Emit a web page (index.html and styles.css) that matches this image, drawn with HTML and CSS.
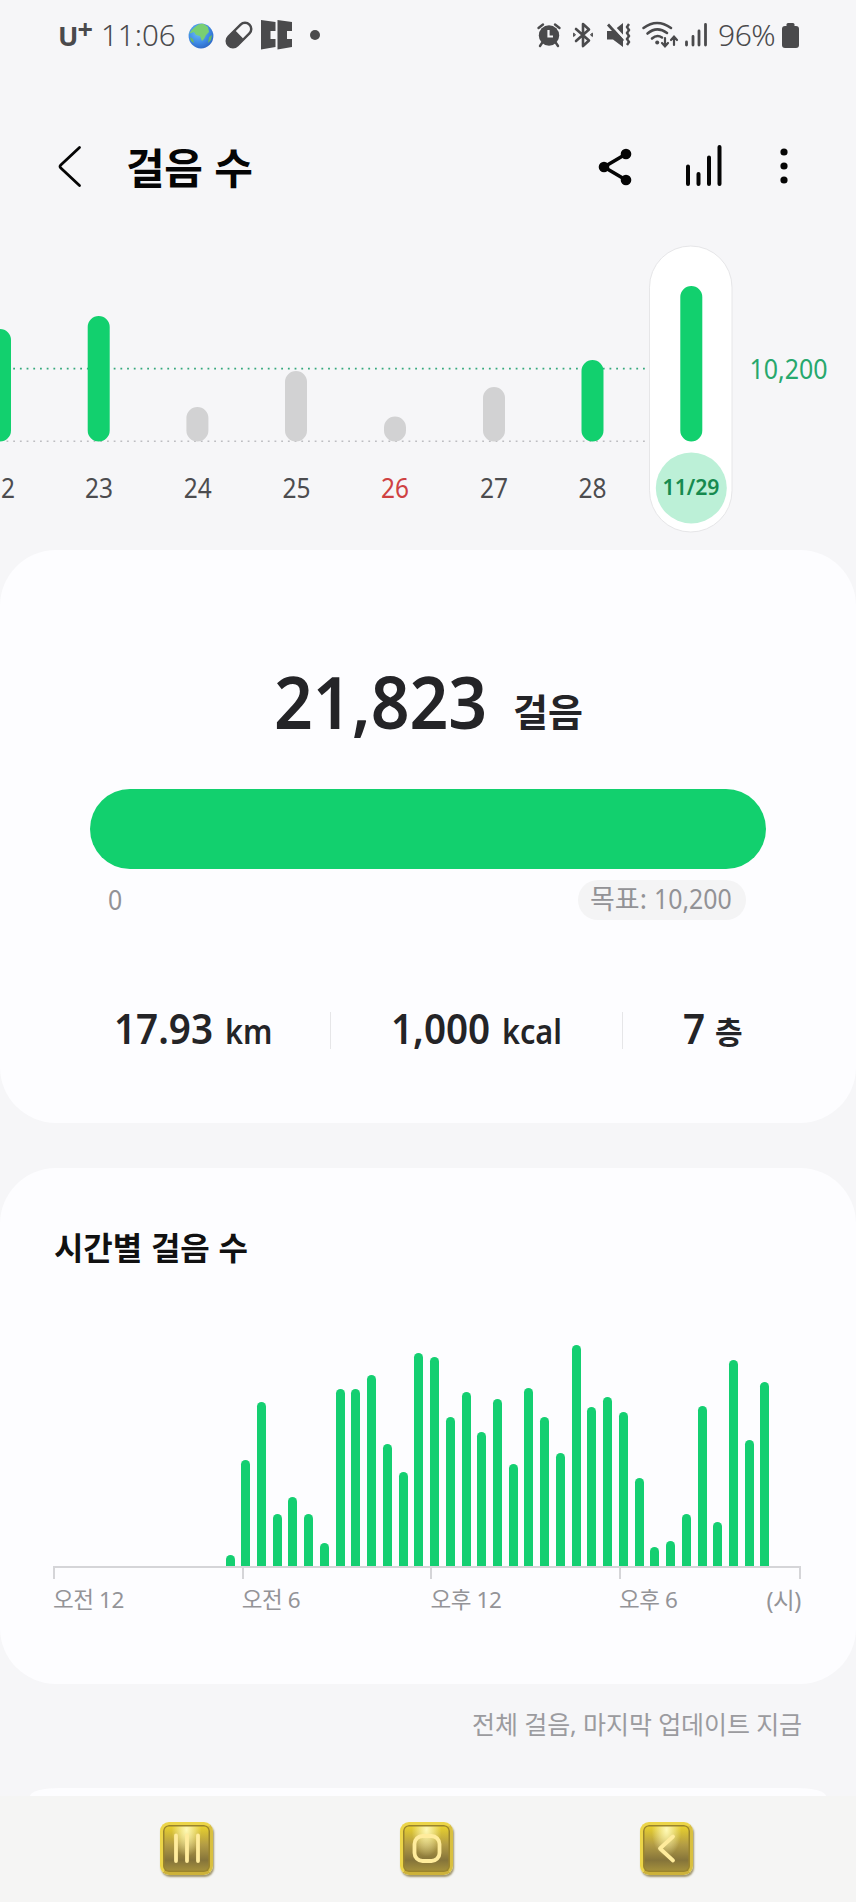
FILE: index.html
```html
<!DOCTYPE html>
<html lang="ko">
<head>
<meta charset="utf-8">
<title>걸음 수</title>
<link rel="stylesheet" href="styles.css">
</head>
<body>
<div class="status">
  <div class="status-left">
    <span class="carrier">U<span class="plus">+</span></span>
    <span class="clock">11:06</span>
    <svg class="globe" width="26" height="26" viewBox="0 0 26 26">
      <defs><radialGradient id="sea" cx=".4" cy=".35" r=".7"><stop offset="0" stop-color="#6cc0f4"/><stop offset=".6" stop-color="#3f8be6"/><stop offset="1" stop-color="#2c66c4"/></radialGradient></defs>
      <circle cx="13" cy="13" r="12.4" fill="url(#sea)"/>
      <path d="M7 4Q11 0 16 1l4 3 1 5-3 3-2 4-2 2-2-5-4-1-2-3-3 1-2 1Q3 7 7 4Z" fill="#79cf72"/>
      <path d="M21 14l3-2-1 5-3 3zM2 14l3 2 1 4-3-2z" fill="#68b965"/>
    </svg>
    <svg class="pill" width="28" height="28" viewBox="0 0 28 28">
      <g transform="rotate(-45 14 14)"><rect x="-2" y="6.500" width="32" height="15" rx="7.500" fill="#4a4a4c"/><path d="M14.500 9H22.500a5 5 0 0 1 0 10H14.500Z" fill="#f6f6f8"/></g>
    </svg>
    <svg class="marks" width="32" height="30" viewBox="0 0 32 30" fill="#4a4a4c">
      <path d="M0 0 14.500 2V11H9.500V19H14.500V27L0 29.500ZM16.500 0 31 2V11H26V19H31V27L16.500 29.500Z"/>
    </svg>
    <span class="dot"></span>
  </div>
  <div class="status-right">
    <svg width="24" height="24" viewBox="0 0 24 24" fill="#4a4a4c"><circle cx="12" cy="12.500" r="10.200"/><path d="M1.500 5 6 1.500M22.500 5 18 1.500M5 20l-2 3M19 20l2 3" stroke="#4a4a4c" stroke-width="2.400" stroke-linecap="round"/><path d="M11.500 7v6.500H16" fill="none" stroke="#f6f6f8" stroke-width="2.200"/></svg>
    <svg class="bt" width="22" height="26" viewBox="0 0 22 26" fill="none" stroke="#4a4a4c" stroke-width="2.600" stroke-linecap="round" stroke-linejoin="round"><path d="M4 7l13 11.500-6 5.500V2l6 5.500L4 19"/><path d="M1.600 11.500v3l1.700-1.500zM20.400 11.500v3L18.700 13z" fill="#4a4a4c" stroke-width="1"/></svg>
    <svg class="mute" width="24" height="24" viewBox="0 0 24 24" fill="#4a4a4c"><path d="M0 8H6L16 0V24L6 16.500H0Z"/><path d="M3 0 19 17" stroke="#f6f6f8" stroke-width="3"/><path d="M1 1.500 16 18" stroke="#4a4a4c" stroke-width="2.800"/><path d="M22 1l-2 3 2 3-2 3 2 3-2 3 2 3-2 3" fill="none" stroke="#4a4a4c" stroke-width="2.400"/></svg>
    <svg class="wifi" width="36" height="26" viewBox="0 0 36 26" fill="none" stroke="#4a4a4c" stroke-width="2.600" stroke-linecap="round"><path d="M1.500 6Q15-4 29 6M5.500 11.500Q15 3.500 25 11M10 16.500Q15 12 20 15.500"/><circle cx="15.200" cy="20.500" r="2" fill="#4a4a4c" stroke="none"/><path d="M23 16v8m-3-3 3 3.300 3-3.300M32 23v-8m-3 3 3-3.300 3 3.300" stroke-width="2.200"/></svg>
    <svg class="signal" width="22" height="24" viewBox="0 0 22 24" stroke="#4a4a4c" stroke-width="2.800" stroke-linecap="round"><path d="M1.500 19v3M8 13.500V22M14 8V22M20.500 1.500V22"/></svg>
    <span class="percent">96%</span>
    <svg class="battery" width="17" height="25" viewBox="0 0 17 25" fill="#4a4a4c"><rect x="4.500" width="8" height="6" rx="1.500"/><rect y="3" width="17" height="22" rx="3"/></svg>
  </div>
</div>

<header class="header">
  <svg class="back" width="24" height="42" viewBox="0 0 24 42" fill="none" stroke="#050505" stroke-width="2.800" stroke-linecap="round" stroke-linejoin="round"><path d="M21.500 1.500 2.800 19Q1.200 20.500 2.800 22L21.500 39.500"/></svg>
  <h1>걸음 수</h1>
  <svg class="share" width="34" height="38" viewBox="0 0 34 38"><path d="M28 6 6 19 28 32" fill="none" stroke="#050505" stroke-width="3.600"/><g fill="#050505"><circle cx="28" cy="6" r="5.300"/><circle cx="6" cy="19" r="5.300"/><circle cx="28" cy="32" r="5.300"/></g></svg>
  <svg class="bars-icon" width="36" height="42" viewBox="0 0 36 42" stroke="#050505" stroke-width="4" stroke-linecap="round"><path d="M2 21.500V39M12.500 29V39M23 12.500V39M33.500 2V39"/></svg>
  <svg class="more" width="8" height="36" viewBox="0 0 8 36" fill="#050505"><circle cx="4" cy="4" r="3.600"/><circle cx="4" cy="18" r="3.600"/><circle cx="4" cy="32" r="3.600"/></svg>
</header>

<section class="week">
  <svg width="856" height="310" viewBox="0 240 856 310">
    <path class="goal-line" d="M6.500 368.700H650"/>
    <path class="zero-line" d="M6.500 441.300H650"/>
    <rect class="capsule" x="649.500" y="246" width="82.500" height="286" rx="41.250"/>
    <g class="met">
      <path d="M0 340V430.500M98.700 327V430.500M592.500 371V430.500M691.300 297V430.500"/>
    </g>
    <g class="unmet">
      <path d="M197.400 418V430.500M296 382V430.500M395 427.500V430.500M494 398V430.500"/>
    </g>
    <circle class="today" cx="691.300" cy="488" r="35.500"/>
    <g class="day">
      <text x="8" y="497.500" textLength="14" lengthAdjust="spacingAndGlyphs">2</text>
      <text x="99" y="497.500" textLength="28" lengthAdjust="spacingAndGlyphs">23</text>
      <text x="197.700" y="497.500" textLength="28" lengthAdjust="spacingAndGlyphs">24</text>
      <text x="296.500" y="497.500" textLength="28" lengthAdjust="spacingAndGlyphs">25</text>
      <text class="sunday" x="395" y="497.500" textLength="28" lengthAdjust="spacingAndGlyphs">26</text>
      <text x="494" y="497.500" textLength="28" lengthAdjust="spacingAndGlyphs">27</text>
      <text x="592.500" y="497.500" textLength="28" lengthAdjust="spacingAndGlyphs">28</text>
    </g>
    <text class="today-label" x="691" y="495.300" textLength="57" lengthAdjust="spacingAndGlyphs">11/29</text>
    <text class="goal-label" x="749.500" y="378.700" textLength="78" lengthAdjust="spacingAndGlyphs">10,200</text>
  </svg>
</section>

<section class="card summary">
  <div class="total"><span class="total-num"><span class="narrow">21,823</span></span><span class="total-unit">걸음</span></div>
  <div class="progress"></div>
  <div class="range"><span class="zero narrow">0</span><span class="goal">목표: <span class="goal-num narrow">10,200</span></span></div>
  <div class="stats">
    <div class="stat"><b class="narrow">17.93</b><span class="narrow">km</span></div>
    <div class="stat"><b class="narrow">1,000</b><span class="narrow">kcal</span></div>
    <div class="stat"><b class="narrow">7</b><span class="floors">층</span></div>
  </div>
</section>

<section class="card hourly">
  <h2>시간별 걸음 수</h2>
  <div class="plot">
    <i style="height:11.500px"></i><i style="height:106px"></i><i style="height:164px"></i><i style="height:52.500px"></i><i style="height:69px"></i><i style="height:52.500px"></i><i style="height:23px"></i>
    <i style="height:177.500px"></i><i style="height:177px"></i><i style="height:191px"></i><i style="height:122px"></i><i style="height:94px"></i><i style="height:213px"></i><i style="height:209px"></i>
    <i style="height:149.500px"></i><i style="height:174px"></i><i style="height:134.500px"></i><i style="height:167px"></i><i style="height:102px"></i><i style="height:178px"></i><i style="height:149px"></i>
    <i style="height:113px"></i><i style="height:221.500px"></i><i style="height:159px"></i><i style="height:169.500px"></i><i style="height:154px"></i><i style="height:88px"></i><i style="height:19px"></i>
    <i style="height:25px"></i><i style="height:52.500px"></i><i style="height:160px"></i><i style="height:44.500px"></i><i style="height:206px"></i><i style="height:126px"></i><i style="height:184px"></i>
  </div>
  <div class="axis"><span>오전 12</span><span>오전 6</span><span>오후 12</span><span class="last">오후 6<em>(시)</em></span></div>
</section>

<p class="updated">전체 걸음, 마지막 업데이트 지금</p>
<div class="next-card"></div>

<nav class="nav">
  <span class="key"><svg width="28" height="30" viewBox="0 0 28 30"><path d="M3 1.500V27M14 1.500V27M25 1.500V27"/></svg></span>
  <span class="key"><svg width="28" height="30" viewBox="0 0 28 30"><rect x="1.500" y="2" width="25" height="25" rx="8"/></svg></span>
  <span class="key"><svg width="28" height="30" viewBox="0 0 28 30"><path d="M20 2.500 7 14.500 20 26.500"/></svg></span>
</nav>
</body>
</html>
```
FILE: styles.css
```css
* { box-sizing: border-box; }
body {
  margin: 0;
  width: 856px;
  height: 1902px;
  overflow: hidden;
  background: #f6f6f8;
  color: #242427;
  font-family: "Noto Sans", "Noto Sans CJK KR", sans-serif;
}
h1, h2, p { margin: 0; }
svg { display: block; flex: none; overflow: visible; }
.narrow { display: inline-block; transform: scaleX(.92); transform-origin: 0 50%; }

.status { display: flex; justify-content: space-between; height: 70px; padding: 0 57px 0 58px; color: #4a4a4c; }
.status-left, .status-right { display: flex; align-items: center; }
.carrier { display: flex; width: 43px; font: 700 27px/36px "Noto Sans", sans-serif; padding-top: 2px; }
.plus { font-size: 27px; font-weight: 700; line-height: 22px; margin-left: -1px; }
.clock { width: 86px; font: 300 29.500px/40px "Noto Sans", sans-serif; }
.globe { margin-left: 1px; margin-top: 2px; }
.pill { margin-left: 11px; }
.marks { margin-left: 8px; }
.dot { width: 10px; height: 10px; margin-left: 17px; border-radius: 50%; background: #4a4a4c; }
.bt { margin-left: 11px; }
.mute { margin-left: 13px; }
.wifi { margin-left: 11px; }
.signal { margin-left: 7px; }
.percent { width: 60px; margin-left: 11px; font: 300 30px/40px "Noto Sans", sans-serif; letter-spacing: -.5px; white-space: nowrap; }
.battery { margin-left: 4px; }

.header { display: flex; align-items: center; height: 170px; padding: 22px 68px 0 58px; color: #050505; }
.back { margin-top: 2px; }
.header h1 { flex: 1; margin: -1px 0 0 44px; font: 700 42px/60px "Noto Sans CJK KR", sans-serif; letter-spacing: -.3px; }
.bars-icon { margin-left: 54px; }
.share { margin-top: 1px; }
.more { margin-left: 58px; }

.week { height: 310px; overflow: hidden; }
.goal-line, .zero-line { fill: none; stroke-width: 1.800; stroke-dasharray: 1.800 4.900; stroke: #35a97c; }
.zero-line { stroke: #bdbdc1; stroke-width: 1.500; }
.capsule { fill: #fff; stroke: #e6e6e8; }
.met, .unmet { fill: none; stroke-width: 22; stroke-linecap: round; }
.met { stroke: #12d06e; }
.unmet { stroke: #d2d2d3; }
.today { fill: #bcf0d7; }
.day { font-size: 27px; fill: #4c4c4f; text-anchor: middle; }
.day .sunday { fill: #cf4142; }
.today-label { font-size: 22px; font-weight: 600; fill: #168a4f; text-anchor: middle; }
.goal-label { font-size: 27px; fill: #27a86d; }

.card { border-radius: 56px; background: #fdfdff; }
.summary { height: 573px; padding: 107px 90px 0; }
.total { display: flex; align-items: baseline; height: 132px; padding-left: 184px; line-height: 90px; font-weight: 600; }
.total-num { width: 239px; font-size: 71.500px; }
.total-num .narrow { transform: scaleX(.95); }
.total-unit { position: relative; top: -3px; font-family: "Noto Sans CJK KR", sans-serif; font-size: 38px; font-weight: 700; letter-spacing: 0; }
.progress { height: 80px; border-radius: 40px; background: #12d06e; }
.range { display: flex; justify-content: space-between; padding: 11px 20px 0 18px; color: #929296; font-size: 27px; line-height: 39px; }
.goal { width: 168px; height: 40px; padding-left: 12px; border-radius: 20px; background: #f4f4f5; font-size: 27px; white-space: nowrap; line-height: 38px; }
.stats { display: grid; grid-template-columns: 240px 292px 144px; margin-top: 92px; height: 34px; }
.stat { display: flex; align-items: baseline; line-height: 32px; padding-left: 24px; white-space: nowrap; }
.stat + .stat { padding-left: 60px; border-left: 1px solid #e6e6e8; }
.stat b { font-size: 42px; font-weight: 600; }
.stat span { margin-left: 3px; font-size: 34px; font-weight: 600; transform: scaleX(.9); }
.stat .floors { margin-left: 8px; font-size: 30px; font-weight: 700; position: relative; top: -1px; transform: none; }

.hourly { height: 516px; margin-top: 45px; padding: 54px 54px 0; }
.hourly h2 { height: 122px; color: #111; font: 700 32px/48px "Noto Sans CJK KR", sans-serif; letter-spacing: -.1px; }
.plot { display: flex; align-items: flex-end; gap: 6.735px; height: 222px; padding-left: 171.500px; }
.plot i { flex: none; width: 9px; border-radius: 4.500px 4.500px 0 0; background: #14cf71; }
.axis { display: grid; grid-template-columns: 188.700px 188.700px 188.600px 1fr; width: 748px; margin-left: -1px; border-top: 2px solid #d5d5d8; color: #949498; font-size: 22.500px; line-height: 32px; }
.axis span { position: relative; padding-top: 16px; letter-spacing: -.4px; white-space: nowrap; }
.axis span::before { content: ""; position: absolute; left: 0; top: 0; width: 2px; height: 11px; background: #d5d5d8; }
.axis .last { display: flex; justify-content: space-between; }
.axis .last::after { content: ""; position: absolute; right: 0; top: 0; width: 2px; height: 11px; background: #d5d5d8; }
.axis em { font-style: normal; font-size: 23.500px; }

.updated { height: 104px; padding: 21px 54px 0 0; text-align: right; color: #9b9b9f; font-size: 25px; line-height: 38px; letter-spacing: -.1px; }
.next-card { height: 8px; margin: 0 30px; border-radius: 30px 30px 0 0 / 8px 8px 0 0; background: #fdfdff; }
.nav { display: flex; gap: 187px; height: 106px; padding: 26px 0 0 160px; background: #f5f5f4; }
.key {
  display: flex; align-items: center; justify-content: center;
  width: 53px; height: 53px; border-radius: 9px;
  border: 3px solid #ecd548; border-bottom-color: #cdb23a; border-right-color: #d9c040;
  background: radial-gradient(ellipse at 50% 10%, #fff9b8 0, rgba(255,235,70,0) 45%), linear-gradient(#ecd42b, #b39c45 42%, #85743a 75%, #a9943c);
  box-shadow: inset 0 0 0 1.500px #9a842c, 1px 2px 2px #a0966c;
}
.key svg { fill: none; stroke: #ffec9c; stroke-width: 3.800; stroke-linecap: round; stroke-linejoin: round; }
```
